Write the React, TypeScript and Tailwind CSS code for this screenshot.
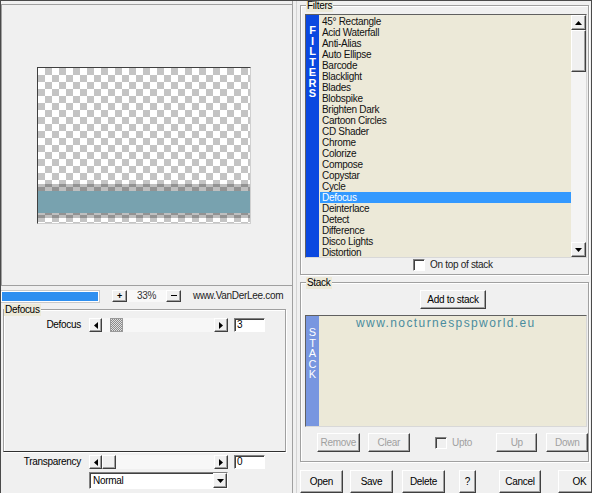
import React from "react"

const raised =
  "bg-[#f0f0f0] border border-t-white border-l-white border-r-[#404040] border-b-[#404040] shadow-[inset_-1px_-1px_0_#a0a0a0]"
const sunken =
  "bg-white border border-t-[#808080] border-l-[#808080] border-r-white border-b-white shadow-[inset_1px_1px_0_#404040]"
const etched = "border border-[#a0a0a0] shadow-[inset_1px_1px_0_#fff,1px_1px_0_#fff]"

const FILTERS = [
  "45° Rectangle",
  "Acid Waterfall",
  "Anti-Alias",
  "Auto Ellipse",
  "Barcode",
  "Blacklight",
  "Blades",
  "Blobspike",
  "Brighten Dark",
  "Cartoon Circles",
  "CD Shader",
  "Chrome",
  "Colorize",
  "Compose",
  "Copystar",
  "Cycle",
  "Defocus",
  "Deinterlace",
  "Detect",
  "Difference",
  "Disco Lights",
  "Distortion",
]

function Tri({ dir, color = "#000" }: { dir: "up" | "down" | "left" | "right"; color?: string }) {
  const pts = {
    up: "0,4 3.5,0 7,4",
    down: "0,0 7,0 3.5,4",
    left: "4,0 4,7 0,3.5",
    right: "0,0 0,7 4,3.5",
  }[dir]
  const horiz = dir === "up" || dir === "down"
  return (
    <svg width={horiz ? 7 : 4} height={horiz ? 4 : 7} viewBox={horiz ? "0 0 7 4" : "0 0 4 7"}>
      <polygon points={pts} fill={color} />
    </svg>
  )
}

function Slider({ dithered }: { dithered?: boolean }) {
  return (
    <div className="flex h-[14px] items-stretch">
      <div className={`${raised} flex w-[13px] items-center justify-center`}>
        <Tri dir="left" />
      </div>
      <div className="flex w-[112px] bg-[#f7f7f7]">
        {dithered ? (
          <div className="ml-[8px] w-[13px] border border-[#9a9a9a] bg-[image:conic-gradient(#8a8a8a_25%,#e0e0e0_0_50%,#8a8a8a_0_75%,#e0e0e0_0)] bg-[length:2px_2px]" />
        ) : (
          <div className={`${raised} w-[14px]`} />
        )}
      </div>
      <div className={`${raised} flex w-[14px] items-center justify-center`}>
        <Tri dir="right" />
      </div>
    </div>
  )
}

function Check({ disabled }: { disabled?: boolean }) {
  return (
    <div
      className={`h-[12px] w-[12px] border border-t-[#808080] border-l-[#808080] border-r-white border-b-white shadow-[inset_1px_1px_0_#404040] ${
        disabled ? "bg-[#f0f0f0]" : "bg-white"
      }`}
    />
  )
}

function Btn({ children, w, disabled, className = "" }: { children: React.ReactNode; w: string; disabled?: boolean; className?: string }) {
  return (
    <div className={`${raised} ${w} ${className} flex items-center justify-center ${disabled ? "text-[#a0a0a0]" : "text-black"}`}>
      {children}
    </div>
  )
}

export default function App() {
  return (
    <div className="flex h-[493px] w-[592px] overflow-hidden border-x border-t border-[#4a4a4a] bg-[#f0f0f0] font-['Liberation_Sans',Arial,sans-serif] text-[10px] leading-none tracking-[-0.3px] text-black">
      {/* left column */}
      <div className="flex w-[292px] shrink-0 flex-col border-r border-[#a0a0a0]">
        <div className="mt-[3px] flex h-[282px] items-center justify-center border-y border-l border-[#a0a0a0] pr-[6px]">
          <div className="flex h-[157px] w-[214px] flex-col border border-t-[#404040] border-l-[#404040] border-r-[#d0d0d0] border-b-[#d0d0d0] bg-[image:conic-gradient(#c4c4c4_25%,#fff_0_50%,#c4c4c4_0_75%,#fff_0)] bg-[length:14px_14px]">
            <div className="h-[116px]" />
            <div className="h-[7px] bg-black/25" />
            <div className="h-[22px] bg-[#78a2af]" />
            <div className="h-[5px] bg-black/25" />
          </div>
        </div>

        <div className="mt-[4px] flex h-[12px] items-center">
          <div className="h-[11px] w-[98px] border border-white bg-[#2e8ff0] shadow-[0_0_0_1px_#c8c8c8]" />
          <Btn w="w-[15px] h-[12px] ml-[13px]">
            <span className="text-[9px] font-bold">+</span>
          </Btn>
          <div className="flex h-[12px] w-[39px] items-center justify-center bg-[#f8f8f8] text-[#333]">33%</div>
          <Btn w="w-[15px] h-[12px]">
            <span className="mb-[1px] block h-[1px] w-[6px] bg-black" />
          </Btn>
          <span className="ml-[12px] text-[#222]">www.VanDerLee.com</span>
        </div>

        <div className={`relative ml-[2px] mt-[7px] h-[143px] w-[283px] ${etched} border-b-[#303030]`}>
          <span className="absolute -top-[6px] left-0 bg-[#ece9d8] px-[1px] leading-[12px]">Defocus</span>
          <div className="mt-[8px] flex items-center">
            <span className="w-[78px] pr-[1px] text-right">Defocus</span>
            <div className="ml-[7px]">
              <Slider dithered />
            </div>
            <div className={`${sunken} ml-[6px] flex h-[14px] w-[31px] items-center pl-[2px]`}>3</div>
          </div>
        </div>

        <div className="mt-[3px] flex items-center">
          <span className="w-[81px] pr-[1px] text-right">Transparency</span>
          <div className="ml-[7px]">
            <Slider />
          </div>
          <div className={`${sunken} ml-[6px] flex h-[14px] w-[31px] items-center pl-[2px]`}>0</div>
        </div>

        <div className={`${sunken} ml-[88px] mt-[3px] flex h-[17px] w-[139px] items-center justify-between pl-[3px]`}>
          <span>Normal</span>
          <div className={`${raised} flex h-[15px] w-[14px] items-center justify-center`}>
            <Tri dir="down" />
          </div>
        </div>
      </div>

      {/* right column */}
      <div className="ml-[3px] flex flex-1 flex-col border-l border-[#d4d4d4] pl-[3px]">
        <div className={`relative mt-[4px] h-[270px] w-[289px] ${etched}`}>
          <span className="absolute -top-[6px] left-[5px] bg-[#ece9d8] px-[1px] leading-[12px]">Filters</span>
          <div className="ml-[4px] mt-[8px] flex h-[244px] w-[282px] border border-t-[#606060] border-l-[#606060] border-r-[#d8d8d8] border-b-[#d8d8d8]">
            <div className="flex w-[13px] flex-col items-center bg-[#0b48e0] pt-[10px] text-[11px] font-bold leading-[10.5px] tracking-normal text-white">
              {"FILTERS".split("").map((c, i) => (
                <span key={i}>{c}</span>
              ))}
            </div>
            <div className="flex-1 overflow-hidden bg-[#ece9d8] pl-[1px] pt-[1px]">
              {FILTERS.map((f) => (
                <div
                  key={f}
                  className={`h-[11px] pl-[2px] leading-[11px] whitespace-nowrap ${
                    f === "Defocus" ? "bg-[#3399ff] text-white" : "text-[#111]"
                  }`}
                >
                  {f}
                </div>
              ))}
            </div>
            <div className="flex w-[15px] flex-col bg-[#f4f4f4]">
              <div className={`${raised} flex h-[15px] items-center justify-center`}>
                <Tri dir="up" />
              </div>
              <div className={`${raised} h-[42px]`} />
              <div className="flex-1" />
              <div className={`${raised} flex h-[15px] items-center justify-center`}>
                <Tri dir="down" />
              </div>
            </div>
          </div>
          <div className="ml-[112px] mt-[1px] flex items-center gap-[5px]">
            <Check />
            <span className="text-[#222]">On top of stack</span>
          </div>
        </div>

        <div className={`relative mt-[7px] h-[180px] w-[289px] ${etched}`}>
          <span className="absolute -top-[6px] left-[5px] bg-[#ece9d8] px-[1px] leading-[12px]">Stack</span>
          <Btn w="w-[66px] h-[19px] ml-[119px] mt-[7px]">Add to stack</Btn>
          <div className="ml-[4px] mt-[6px] flex h-[112px] w-[282px] border border-t-[#606060] border-l-[#606060] border-r-[#d8d8d8] border-b-[#d8d8d8]">
            <div className="flex w-[13px] flex-col items-center bg-[#7896e0] pt-[11px] text-[11px] leading-[10.5px] tracking-normal text-white">
              {"STACK".split("").map((c, i) => (
                <span key={i}>{c}</span>
              ))}
            </div>
            <div className="flex-1 bg-[#ece9d8] pl-[37px] pt-[1px] text-[12px] tracking-[1.4px] text-[#4a8c9e]">
              www.nocturnespspworld.eu
            </div>
          </div>
          <div className="mt-[6px] flex h-[19px] items-center">
            <Btn w="w-[43px] h-[19px] ml-[16px]" disabled>
              Remove
            </Btn>
            <Btn w="w-[43px] h-[19px] ml-[8px]" disabled>
              Clear
            </Btn>
            <div className="ml-[25px]">
              <Check disabled />
            </div>
            <span className="ml-[5px] text-[#a0a0a0]">Upto</span>
            <Btn w="w-[42px] h-[19px] ml-[24px]" disabled>
              Up
            </Btn>
            <Btn w="w-[42px] h-[19px] ml-[9px]" disabled>
              Down
            </Btn>
          </div>
        </div>

        <div className="mt-[8px] flex h-[23px]">
          <Btn w="w-[43px] h-[23px] shrink-0">Open</Btn>
          <Btn w="w-[43px] h-[23px] shrink-0 ml-[7px]">Save</Btn>
          <Btn w="w-[43px] h-[23px] shrink-0 ml-[9px]">Delete</Btn>
          <Btn w="w-[17px] h-[23px] shrink-0 ml-[14px]">?</Btn>
          <Btn w="w-[42px] h-[23px] shrink-0 ml-[23px]">Cancel</Btn>
          <Btn w="w-[43px] h-[23px] shrink-0 ml-[17px]">OK</Btn>
        </div>
      </div>
    </div>
  )
}
